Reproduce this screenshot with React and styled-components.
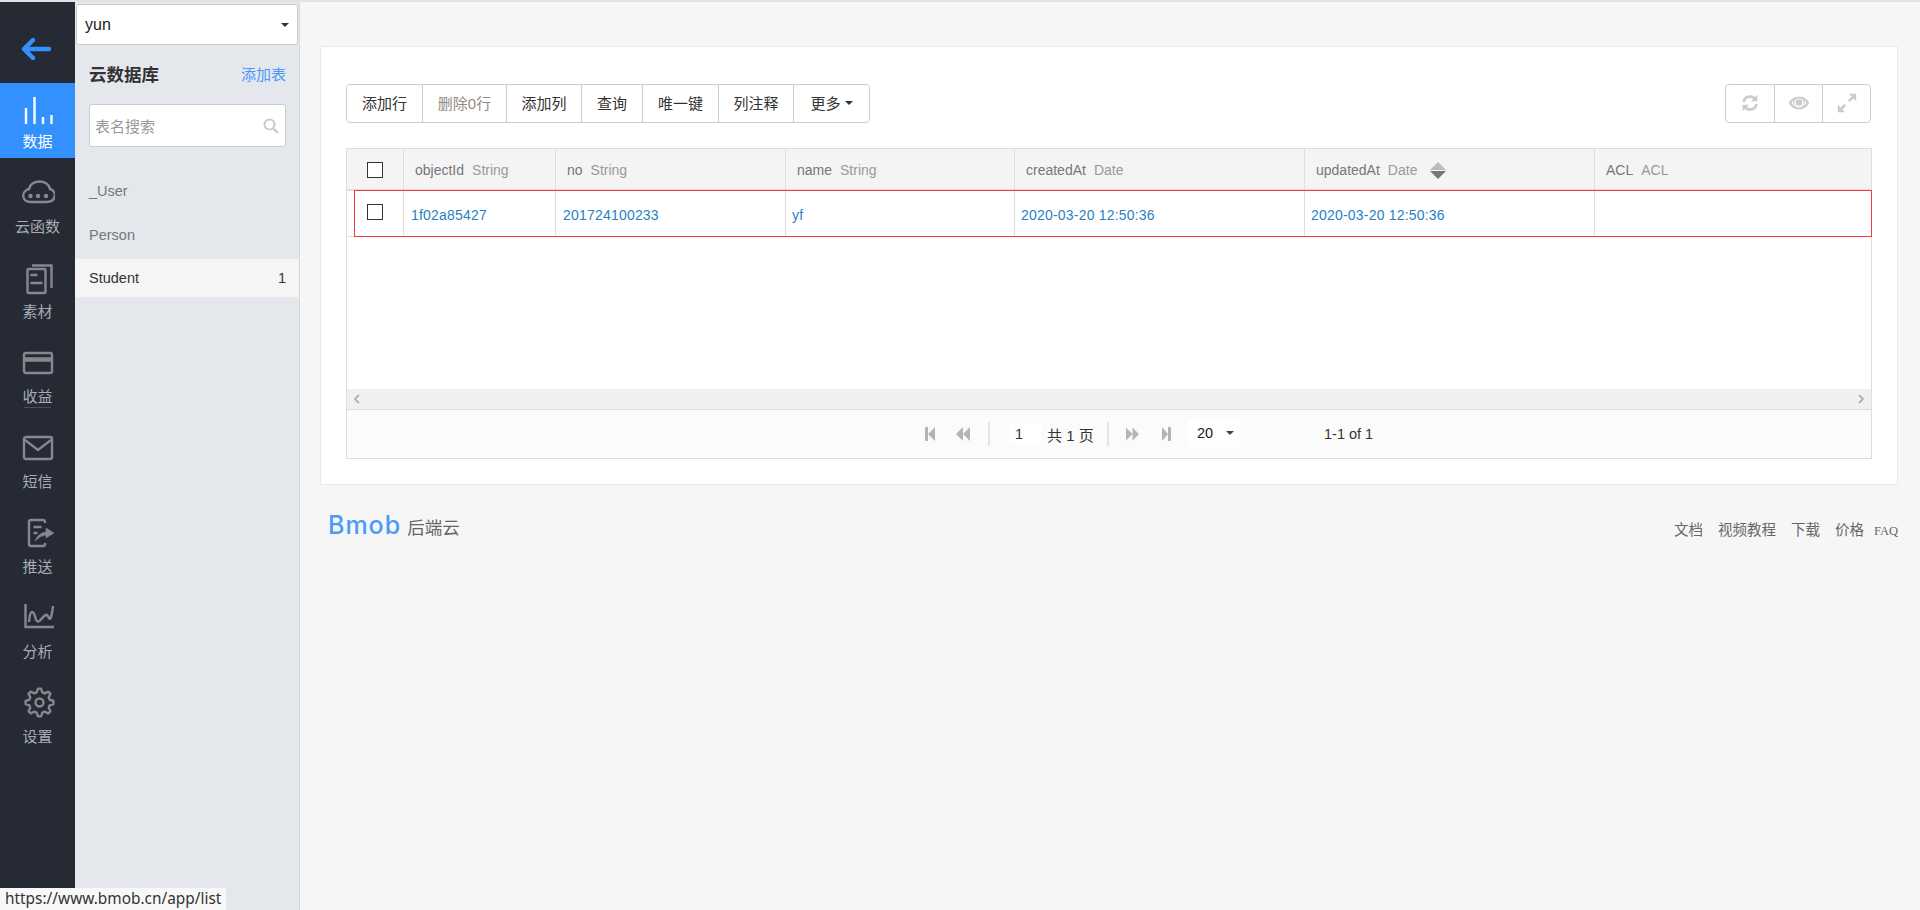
import React from 'react';
import styled, { createGlobalStyle } from 'styled-components';

const FONT = '"Liberation Sans", "Noto Sans CJK SC", sans-serif';

const Global = createGlobalStyle`
  html, body { margin: 0; padding: 0; height: 100%; background: #f6f6f6; }
  body { font-family: ${FONT}; font-size: 14px; color: #333; overflow: hidden; }
  * { box-sizing: border-box; }
`;

const Page = styled.div`
  position: relative;
  display: flex;
  height: 910px;
  border-top: 2px solid #e2e2e2;
`;

/* left icon rail */
const Rail = styled.nav`
  width: 75px;
  flex: none;
  background: #252a34;
  padding-top: 1px;
`;
const Back = styled.div`
  height: 80px;
  display: flex;
  align-items: center;
  justify-content: center;
  padding-top: 12px;
  padding-right: 3px;
`;
const RailItem = styled.div`
  height: 75px;
  margin-bottom: 10px;
  display: flex;
  flex-direction: column;
  align-items: center;
  justify-content: flex-end;
  padding-bottom: 6px;
  gap: 6px;
  background: ${p => (p.$active ? '#3290ff' : 'transparent')};
  color: ${p => (p.$active ? '#fff' : '#a9adb3')};
  font-size: 15px;
  line-height: 20px;
`;
const RailLabel = styled.span`
  display: block;
  height: 20px;
  ${p => p.$underline && 'box-shadow: 0 3px 0 -2px #4a4e57;'}
`;
const RailIcon = styled.svg`
  width: 34px;
  height: 34px;
  fill: none;
  stroke: ${p => (p.$active ? '#fff' : '#85888e')};
  stroke-width: 2.4;
`;

/* table list column */
const Side = styled.aside`
  width: 225px;
  flex: none;
  background: #e4e8ed;
  border-right: 1px solid #d8d8d8;
`;
const AppSelect = styled.div`
  height: 41px;
  margin: 2px 1px 0 1px;
  padding: 0 8px;
  display: flex;
  align-items: center;
  justify-content: space-between;
  background: #fff;
  border: 1px solid #ccc;
  border-radius: 3px;
  font-size: 16px;
  color: #222;
`;
const Caret = styled.i`
  width: 0;
  height: 0;
  border-left: 4px solid transparent;
  border-right: 4px solid transparent;
  border-top: 4px solid ${p => p.$color || '#333'};
`;
const SideHead = styled.div`
  display: flex;
  align-items: center;
  justify-content: space-between;
  padding: 0 13px 2px 14px;
  height: 59px;
`;
const SideTitle = styled.h2`
  margin: 0;
  font-size: 17.5px;
  font-weight: 700;
  color: #333;
`;
const AddLink = styled.a`
  font-size: 15px;
  color: #4a97f7;
`;
const SearchBox = styled.div`
  margin: 0 13px 0 14px;
  height: 43px;
  padding: 0 5px;
  display: flex;
  align-items: center;
  justify-content: space-between;
  background: #fff;
  border: 1px solid #ccc;
  border-radius: 3px;
  color: #999;
  font-size: 15px;
`;
const TableList = styled.ul`
  list-style: none;
  margin: 22px 0 0;
  padding: 0;
`;
const TableItem = styled.li`
  height: 44px;
  padding: 0 13px 0 14px;
  display: flex;
  align-items: center;
  justify-content: space-between;
  font-size: 14.5px;
  color: ${p => (p.$active ? '#333' : '#777')};
  background: ${p => (p.$active ? '#f5f5f5' : 'transparent')};
  ${p => p.$active && 'height: 38px; margin-top: 2px;'}
`;

/* main area */
const Main = styled.main`
  flex: 1;
  padding: 44px 22px 0 20px;
  min-width: 0;
`;
const Card = styled.section`
  background: #fff;
  border: 1px solid #e8e8e8;
  padding: 37px 25px 24px;
  height: 439px;
`;
const ToolRow = styled.div`
  display: flex;
  justify-content: space-between;
  height: 40px;
  margin-bottom: 24px;
  padding-right: 1px;
`;
const BtnGroup = styled.div`
  display: flex;
  border: 1px solid #ccc;
  border-radius: 4px;
  height: 39px;
`;
const Btn = styled.div`
  width: ${p => p.$w}px;
  display: flex;
  align-items: center;
  justify-content: center;
  gap: 4px;
  font-size: 15px;
  padding-bottom: 2px;
  color: ${p => (p.$off ? '#8f8a85' : '#333')};
  background: #fff;
  &:not(:last-child) { border-right: 1px solid #ccc; }
  &:first-child { border-radius: 4px 0 0 4px; }
  &:last-child { border-radius: 0 4px 4px 0; }
`;
const ToolIcon = styled.svg`
  width: 22px;
  height: 22px;
  fill: #ccc;
`;

const Grid = styled.div`
  position: relative;
  border: 1px solid #ddd;
  height: 311px;
  display: flex;
  flex-direction: column;
`;
const Row = styled.div`
  display: grid;
  grid-template-columns: 57px 152px 230px 229px 290px 290px 1fr;
  height: ${p => p.$h}px;
  background: ${p => p.$bg || '#fff'};
  border-bottom: ${p => p.$line || '1px solid #ddd'};
  flex: none;
`;
const Cell = styled.div`
  display: flex;
  align-items: center;
  padding-left: ${p => p.$pad ?? 11}px;
  padding-top: 2px;
  border-right: 1px solid #ddd;
  white-space: nowrap;
  font-size: 14px;
  &:last-child { border-right: 0; }
  a { color: #2a7fc2; letter-spacing: 0.2px; }
`;
const ColName = styled.span`
  color: #777;
  margin-right: 8px;
`;
const ColType = styled.span`
  color: #999;
`;
const Check = styled.span`
  width: 16px;
  height: 16px;
  border: 1px solid #333;
  background: #fff;
  margin-left: 20px;
  position: relative;
  top: ${p => p.$top || 0}px;
`;
const SortMark = styled.span`
  display: flex;
  flex-direction: column;
  gap: 1px;
  margin-left: 13px;
  &::before, &::after {
    content: '';
    width: 0;
    height: 0;
    border-left: 8px solid transparent;
    border-right: 8px solid transparent;
  }
  &::before { border-bottom: 8px solid #bbb; }
  &::after { border-top: 8px solid #777; }
`;
const Spacer = styled.div`
  flex: 1;
`;
const ScrollBar = styled.div`
  height: 20px;
  background: #f0f0f0;
  display: flex;
  align-items: center;
  justify-content: space-between;
  padding: 0 4px;
  flex: none;
`;
const Chevron = styled.svg`
  width: 12px;
  height: 12px;
  fill: none;
  stroke: #a6a6a6;
  stroke-width: 1.6;
`;
const Pager = styled.div`
  flex: none;
  height: 49px;
  background: #fbfbfb;
  border-top: 1px solid #ddd;
  display: flex;
  align-items: center;
  padding-left: 578px;
  font-size: 14.5px;
  color: #333;
`;
const PagerIcon = styled.svg`
  width: ${p => p.$w}px;
  height: 14px;
  fill: #b4b4b4;
  margin-right: ${p => p.$gap || 0}px;
`;
const PagerSep = styled.i`
  width: 2px;
  height: 24px;
  background: #e4e4e4;
  margin: 0 ${p => p.$r}px 0 ${p => p.$l}px;
`;
const PageInput = styled.div`
  width: 32px;
  height: 20px;
  background: #fff;
  padding-left: 6px;
  line-height: 20px;
  margin-right: 6px;
`;
const PageTotal = styled.span`
  width: 45px;
  font-size: 15px;
  white-space: nowrap;
`;
const SizeSelect = styled.div`
  width: 52px;
  height: 28px;
  background: #fff;
  display: flex;
  align-items: center;
  gap: 13px;
  padding-left: 9px;
  margin-top: -2px;
  margin-right: 84px;
  font-size: 14.5px;
  color: #222;
`;
const Highlight = styled.div`
  position: absolute;
  left: 7px;
  right: -1px;
  top: 41px;
  height: 47px;
  border: 1px solid #f23c40;
  pointer-events: none;
`;

const Foot = styled.footer`
  display: flex;
  align-items: center;
  justify-content: space-between;
  margin-top: 27px;
  padding-left: 8px;
  height: 28px;
`;
const Brand = styled.div`
  display: flex;
  align-items: center;
  gap: 6px;
  color: #666;
  font-size: 17.5px;
`;
const BmobMark = styled.span`
  font-family: "Inter", "Liberation Sans", sans-serif;
  font-size: 25px;
  font-weight: 500;
  letter-spacing: 1px;
  color: #4a9bf8;
  line-height: 28px;
  position: relative;
  top: -1px;
`;
const FootLinks = styled.div`
  display: flex;
  align-items: baseline;
  gap: 15px;
  font-size: 14.5px;
  color: #666;
  padding-top: 4px;
`;
const Faq = styled.span`
  font-family: "Liberation Serif", serif;
  font-size: 12.5px;
  margin-left: -5px;
`;
const StatusTip = styled.div`
  position: absolute;
  left: 0;
  bottom: 0;
  width: 226px;
  height: 22px;
  background: #f8f8f8;
  border-radius: 0 3px 0 0;
  padding-left: 5px;
  font-family: "Noto Sans", sans-serif;
  font-size: 15.4px;
  line-height: 22px;
  color: #333;
`;

// cog outline for the settings entry
const cogPath = (cx, cy, outer, inner, teeth) => {
  const pts = [];
  for (let i = 0; i < teeth; i++) {
    const step = (Math.PI * 2) / teeth;
    const a = i * step - Math.PI / 2;
    [[-0.14, outer], [0.14, outer], [0.36, inner], [0.64, inner]].forEach(([f, r]) => {
      const t = a + f * step;
      pts.push(`${(cx + r * Math.cos(t)).toFixed(1)} ${(cy + r * Math.sin(t)).toFixed(1)}`);
    });
  }
  return `M${pts.join('L')}z`;
};

const railEntries = [
  { label: '数据', active: true, icon: <path d="M5 16v16M13.500 5v27M22 25v7M30.500 23v9" /> },
  { label: '云函数', icon: <><path d="M10 25h15c11 0 11-11 4-13C27 2 10 2 8 12 0 14 0 25 10 25z" /><circle cx="9.500" cy="19" r="1" fill="#85888e" /><circle cx="17" cy="19" r="1" fill="#85888e" /><circle cx="25" cy="19" r="1" fill="#85888e" /></> },
  { label: '素材', icon: <><rect x="6.500" y="7" width="18" height="24" rx="1" /><path d="M11 3.500h19.500V26M9.500 13h7M9.500 21h12" /></> },
  { label: '收益', underline: true, icon: <><rect x="3" y="6" width="28" height="20" rx="2" /><path d="M3 12.500h28" strokeWidth="4.500" /></> },
  { label: '短信', icon: <><rect x="3" y="5" width="28" height="22" rx="2" /><path d="M4 8l13 10L30 8" /></> },
  { label: '推送', icon: <><path d="M24 6V5q0-2-2-2H10Q8 3 8 5v22q0 2 2 2h12q2 0 2-2v-1M12.500 10h8M12.500 16h4" /><path d="M14 24q3-8 11-9v-4l8 5-8 5v-3q-5 0-11 6z" fill="#85888e" strokeWidth="0.6" /></> },
  { label: '分析', icon: <><path d="M4.500 2v23H33" /><path d="M8 20q1-10 3-10t3.500 6 5 2 5-5 3.500 3 4-12" /></> },
  { label: '设置', icon: <><path d={cogPath(18.5, 15.5, 14, 10.5, 8)} strokeLinejoin="round" /><circle cx="18.500" cy="15.500" r="4" /></> },
];

const columns = [
  ['objectId', 'String', '1f02a85427', 7],
  ['no', 'String', '201724100233', 7],
  ['name', 'String', 'yf', 6],
  ['createdAt', 'Date', '2020-03-20 12:50:36', 6],
  ['updatedAt', 'Date', '2020-03-20 12:50:36', 6],
  ['ACL', 'ACL', '', 6],
];

const tools = [
  ['添加行', 76], ['删除0行', 84], ['添加列', 75], ['查询', 61], ['唯一键', 76], ['列注释', 75],
];

const App = () => {
  return (
    <Page>
      <Global />
      <Rail>
        <Back>
          <svg width="30" height="22" viewBox="0 0 30 22">
            <path d="M12 2L3 11l9 9M4 11h24" fill="none" stroke="#3290ff" strokeWidth="4.5" strokeLinecap="round" strokeLinejoin="round" />
          </svg>
        </Back>
        {railEntries.map(e => (
          <RailItem key={e.label} $active={e.active}>
            <RailIcon viewBox="0 0 34 34" $active={e.active}>{e.icon}</RailIcon>
            <RailLabel $underline={e.underline}>{e.label}</RailLabel>
          </RailItem>
        ))}
      </Rail>

      <Side>
        <AppSelect>yun<Caret /></AppSelect>
        <SideHead>
          <SideTitle>云数据库</SideTitle>
          <AddLink>添加表</AddLink>
        </SideHead>
        <SearchBox>
          表名搜索
          <svg width="18" height="18" viewBox="0 0 18 18" fill="none" stroke="#ccc" strokeWidth="2.2">
            <circle cx="7.5" cy="7.5" r="5" /><path d="M11.5 11.5L16 16" />
          </svg>
        </SearchBox>
        <TableList>
          <TableItem>_User</TableItem>
          <TableItem>Person</TableItem>
          <TableItem $active>Student<span>1</span></TableItem>
        </TableList>
      </Side>

      <Main>
        <Card>
          <ToolRow>
            <BtnGroup>
              {tools.map(([t, w]) => (
                <Btn key={t} $w={w} $off={t.startsWith('删除')}>{t}</Btn>
              ))}
              <Btn $w={75}>更多<Caret $color="#333" /></Btn>
            </BtnGroup>
            <BtnGroup>
              <Btn $w={49}>
                <ToolIcon viewBox="0 0 24 24" style={{ fill: 'none', stroke: '#ccc', strokeWidth: 3 }}>
                  <path d="M5 11q1-6 7-6 4 0 6 3M19 13q-1 6-7 6-4 0-6-3" />
                  <path d="M20 3v7h-7zM4 21v-7h7z" fill="#ccc" stroke="none" />
                </ToolIcon>
              </Btn>
              <Btn $w={48}>
                <ToolIcon viewBox="0 0 24 24">
                  <path fillRule="evenodd" d="M12 5c6 0 10 4 11 7-1 3-5 7-11 7S2 15 1 12c1-3 5-7 11-7zm0 2a5 5 0 1 0 0 10 5 5 0 0 0 0-10zM4 12c1 1.500 2 3 4 4a6 6 0 0 1-1-8c-1 1-2 2-3 4zm16 0c-1-2-2-3-3-4a6 6 0 0 1-1 8c2-1 3-2.500 4-4z" />
                  <circle cx="12" cy="11.500" r="3.500" />
                </ToolIcon>
              </Btn>
              <Btn $w={47}>
                <ToolIcon viewBox="0 0 24 24">
                  <path d="M14 2h8v8l-3-3-4 4-2-2 4-4zM10 22H2v-8l3 3 4-4 2 2-4 4z" />
                </ToolIcon>
              </Btn>
            </BtnGroup>
          </ToolRow>

          <Grid>
            <Row $h={42} $bg="#f4f4f4" $line="2px solid #ddd">
              <Cell $pad={0}><Check /></Cell>
              {columns.map(([name, type]) => (
                <Cell key={name}>
                  <ColName>{name}</ColName>
                  <ColType>{type}</ColType>
                  {name === 'updatedAt' && <SortMark />}
                </Cell>
              ))}
            </Row>
            <Row $h={46}>
              <Cell $pad={0}><Check $top={-3} /></Cell>
              {columns.map(([name, , value, pad]) => (
                <Cell key={name} $pad={pad}><a>{value}</a></Cell>
              ))}
            </Row>
            <Spacer />
            <ScrollBar>
              <Chevron viewBox="0 0 12 12"><path d="M8 2L4 6l4 4" /></Chevron>
              <Chevron viewBox="0 0 12 12"><path d="M4 2l4 4-4 4" /></Chevron>
            </ScrollBar>
            <Pager>
              <PagerIcon viewBox="0 0 10 14" $w={10} $gap={21}><path d="M0 0h3v14H0zM10 0v14L3 7z" /></PagerIcon>
              <PagerIcon viewBox="0 0 14 14" $w={14}><path d="M7 0v14L0 7zM14 0v14L7 7z" /></PagerIcon>
              <PagerSep $l={18} $r={19} />
              <PageInput>1</PageInput>
              <PageTotal>共 1 页</PageTotal>
              <PagerSep $l={15} $r={17} />
              <PagerIcon viewBox="0 0 14 14" $w={13} $gap={23}><path d="M0 0v14l7-7zM7 0v14l7-7z" /></PagerIcon>
              <PagerIcon viewBox="0 0 9 14" $w={9} $gap={17}><path d="M0 0v14l6-7zM6 0h3v14H6z" /></PagerIcon>
              <SizeSelect>20<Caret $color="#444" /></SizeSelect>
              1-1 of 1
            </Pager>
            <Highlight />
          </Grid>
        </Card>

        <Foot>
          <Brand><BmobMark>Bmob</BmobMark>后端云</Brand>
          <FootLinks>
            <span>文档</span><span>视频教程</span><span>下载</span><span>价格</span><Faq>FAQ</Faq>
          </FootLinks>
        </Foot>
      </Main>

      <StatusTip>https://www.bmob.cn/app/list</StatusTip>
    </Page>
  );
};

export default App;
